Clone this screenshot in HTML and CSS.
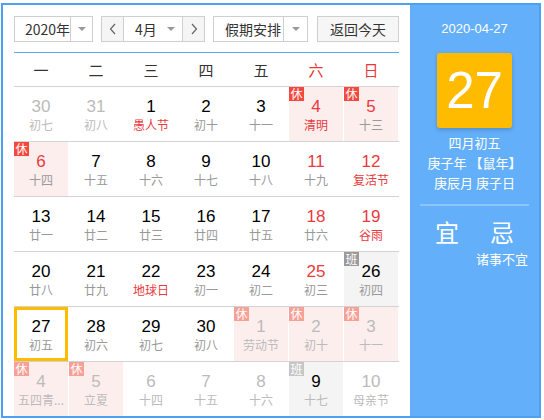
FILE: index.html
```html
<!DOCTYPE html>
<html lang="zh">
<head>
<meta charset="utf-8">
<link rel="stylesheet" href="styles.css">
</head>
<body>
<div class="cal">
  <div class="main">
    <div class="toolbar">
      <div class="sel year"><span class="txt">2020年</span><span class="arr"><i class="tri"></i></span></div>
      <div class="sel month">
        <span class="nav prev"><svg width="8" height="12" viewBox="0 0 8 12"><polyline points="6,1 1.5,6 6,11" fill="none" stroke="#666" stroke-width="1.2"/></svg></span>
        <span class="txt">4月</span><span class="arr noline"><i class="tri"></i></span>
        <span class="nav next"><svg width="8" height="12" viewBox="0 0 8 12"><polyline points="2,1 6.5,6 2,11" fill="none" stroke="#666" stroke-width="1.2"/></svg></span>
      </div>
      <div class="sel holi"><span class="txt">假期安排</span><span class="arr"><i class="tri"></i></span></div>
      <div class="btn">返回今天</div>
    </div>
    <div class="hline"></div>
    <div class="head">
      <span>一</span><span>二</span><span>三</span><span>四</span><span>五</span><span class="red">六</span><span class="red">日</span>
    </div>
    <div class="week">
      <div class="day other"><div class="num">30</div><div class="lun">初七</div></div>
      <div class="day other"><div class="num">31</div><div class="lun">初八</div></div>
      <div class="day"><div class="num">1</div><div class="lun fest">愚人节</div></div>
      <div class="day"><div class="num">2</div><div class="lun">初十</div></div>
      <div class="day"><div class="num">3</div><div class="lun">十一</div></div>
      <div class="day rest"><span class="tag">休</span><div class="num red">4</div><div class="lun fest">清明</div></div>
      <div class="day rest"><span class="tag">休</span><div class="num red">5</div><div class="lun">十三</div></div>
    </div>
    <div class="week">
      <div class="day rest"><span class="tag">休</span><div class="num red">6</div><div class="lun">十四</div></div>
      <div class="day"><div class="num">7</div><div class="lun">十五</div></div>
      <div class="day"><div class="num">8</div><div class="lun">十六</div></div>
      <div class="day"><div class="num">9</div><div class="lun">十七</div></div>
      <div class="day"><div class="num">10</div><div class="lun">十八</div></div>
      <div class="day"><div class="num red">11</div><div class="lun">十九</div></div>
      <div class="day"><div class="num red">12</div><div class="lun fest">复活节</div></div>
    </div>
    <div class="week">
      <div class="day"><div class="num">13</div><div class="lun">廿一</div></div>
      <div class="day"><div class="num">14</div><div class="lun">廿二</div></div>
      <div class="day"><div class="num">15</div><div class="lun">廿三</div></div>
      <div class="day"><div class="num">16</div><div class="lun">廿四</div></div>
      <div class="day"><div class="num">17</div><div class="lun">廿五</div></div>
      <div class="day"><div class="num red">18</div><div class="lun">廿六</div></div>
      <div class="day"><div class="num red">19</div><div class="lun fest">谷雨</div></div>
    </div>
    <div class="week">
      <div class="day"><div class="num">20</div><div class="lun">廿八</div></div>
      <div class="day"><div class="num">21</div><div class="lun">廿九</div></div>
      <div class="day"><div class="num">22</div><div class="lun fest">地球日</div></div>
      <div class="day"><div class="num">23</div><div class="lun">初一</div></div>
      <div class="day"><div class="num">24</div><div class="lun">初二</div></div>
      <div class="day"><div class="num red">25</div><div class="lun">初三</div></div>
      <div class="day work"><span class="tag">班</span><div class="num">26</div><div class="lun">初四</div></div>
    </div>
    <div class="week">
      <div class="day today"><div class="num">27</div><div class="lun">初五</div></div>
      <div class="day"><div class="num">28</div><div class="lun">初六</div></div>
      <div class="day"><div class="num">29</div><div class="lun">初七</div></div>
      <div class="day"><div class="num">30</div><div class="lun">初八</div></div>
      <div class="day other rest"><span class="tag">休</span><div class="num">1</div><div class="lun">劳动节</div></div>
      <div class="day other rest"><span class="tag">休</span><div class="num">2</div><div class="lun">初十</div></div>
      <div class="day other rest"><span class="tag">休</span><div class="num">3</div><div class="lun">十一</div></div>
    </div>
    <div class="week">
      <div class="day other rest"><span class="tag">休</span><div class="num">4</div><div class="lun">五四青...</div></div>
      <div class="day other rest"><span class="tag">休</span><div class="num">5</div><div class="lun">立夏</div></div>
      <div class="day other"><div class="num">6</div><div class="lun">十四</div></div>
      <div class="day other"><div class="num">7</div><div class="lun">十五</div></div>
      <div class="day other"><div class="num">8</div><div class="lun">十六</div></div>
      <div class="day other work"><span class="tag">班</span><div class="num black">9</div><div class="lun">十七</div></div>
      <div class="day other"><div class="num">10</div><div class="lun">母亲节</div></div>
    </div>
  </div>
  <div class="panel">
    <div class="pdate">2020-04-27</div>
    <div class="bigday">27</div>
    <div class="plunar">
      <div>四月初五</div>
      <div>庚子年 【鼠年】</div>
      <div>庚辰月 庚子日</div>
    </div>
    <div class="pline"></div>
    <div class="yiji"><span>宜</span><span>忌</span></div>
    <div class="ji">诸事不宜</div>
  </div>
</div>
</body>
</html>
```
FILE: styles.css
```css
body {
  margin: 0;
  font-family: "Noto Sans CJK SC", sans-serif;
  background: #fff;
}
.cal {
  display: flex;
  width: 540px;
  height: 415px;
  margin: 3px 0 0 1px;
  border: 2px solid #4fa0f2;
  box-sizing: border-box;
  overflow: hidden;
}
.main {
  width: 407px;
  padding: 11px 11px 0;
  box-sizing: border-box;
  background: #fff;
}
.toolbar {
  display: flex;
  height: 26px;
}
.sel {
  display: flex;
  border: 1px solid #cfcfcf;
  box-sizing: border-box;
  height: 26px;
  font-size: 14px;
  color: #333;
  line-height: 24px;
}
.sel .txt {
  flex: 1;
  padding-left: 10px;
  white-space: nowrap;
}
.sel .arr {
  width: 23px;
  border-left: 1px solid #cfcfcf;
  display: flex;
  align-items: center;
  justify-content: center;
}
.sel .arr.noline {
  border-left: none;
}
.tri {
  width: 0;
  height: 0;
  border-left: 4px solid transparent;
  border-right: 4px solid transparent;
  border-top: 4px solid #999;
}
.year {
  width: 79px;
  margin-right: 8px;
}
.month {
  width: 104px;
  margin-right: 8px;
}
.month .txt {
  padding-left: 11px;
}
.month .arr {
  width: 22px;
}
.nav {
  width: 21px;
  background: #f5f5f5;
  display: flex;
  align-items: center;
  justify-content: center;
}
.prev {
  border-right: 1px solid #cfcfcf;
}
.next {
  border-left: 1px solid #cfcfcf;
}
.holi {
  width: 95px;
  margin-right: 9px;
}
.holi .txt {
  padding-left: 11px;
  overflow: hidden;
}
.btn {
  width: 82px;
  height: 26px;
  box-sizing: border-box;
  border: 1px solid #cfcfcf;
  background: #f6f6f6;
  font-size: 14px;
  color: #333;
  line-height: 24px;
  text-align: center;
}
.hline {
  height: 1px;
  background: #5aa8f4;
  margin-top: 10px;
}
.head {
  display: grid;
  grid-template-columns: repeat(7, 55px);
  height: 33px;
  line-height: 33px;
  font-size: 15px;
  color: #333;
}
.head span {
  width: 54px;
  text-align: center;
}
.head .red {
  color: #e8383d;
}
.week {
  display: grid;
  grid-template-columns: repeat(7, 55px);
  height: 55px;
  border-top: 1px solid #d3d3d3;
  box-sizing: border-box;
}
.day {
  position: relative;
  width: 54px;
  height: 54px;
  box-sizing: border-box;
  padding-top: 10px;
  text-align: center;
}
.num {
  font-family: "Liberation Sans", sans-serif;
  font-size: 17px;
  line-height: 20px;
  color: #000;
}
.lun {
  font-size: 12px;
  line-height: 16px;
  color: #999;
  white-space: nowrap;
}
.num.red, .lun.fest {
  color: #ea3a3e;
}
.rest {
  background: #fdeeee;
}
.work {
  background: #f4f4f4;
}
.tag {
  position: absolute;
  top: 0;
  left: 0;
  width: 15px;
  height: 14px;
  line-height: 14px;
  font-size: 12px;
  color: #fff;
  text-align: center;
  background: #f5483f;
}
.work .tag {
  background: #9a9a9a;
}
.other .num, .other .lun {
  color: #bbb;
}
.other .num.black {
  color: #000;
}
.other.rest .tag {
  background: #f7a097;
}
.other.work .tag {
  background: #c6c6c6;
}
.today {
  border: 3px solid #ffbb00;
  padding-top: 7px;
}
.panel {
  flex: 1;
  background: #64aff9;
  color: #fff;
  text-align: center;
}
.pdate {
  font-family: "Liberation Sans", sans-serif;
  font-size: 13px;
  line-height: 20px;
  margin-top: 14px;
}
.bigday {
  width: 75px;
  height: 75px;
  margin: 14px auto 0;
  background: #ffbb00;
  border-radius: 3px;
  box-shadow: 0 2px 4px rgba(0, 0, 0, 0.18);
  font-family: "Liberation Sans", sans-serif;
  font-size: 51px;
  line-height: 75px;
  color: #fff;
}
.plunar {
  margin-top: 5px;
  font-size: 13px;
  line-height: 20px;
}
.pline {
  height: 2px;
  margin: 11px 10px 0;
  background: #8cc5fb;
}
.yiji {
  display: flex;
  justify-content: center;
  gap: 31px;
  margin-top: 11px;
  font-size: 24px;
  line-height: 30px;
}
.ji {
  margin-top: 3px;
  text-align: right;
  padding-right: 11px;
  font-size: 13px;
  line-height: 18px;
}
```
